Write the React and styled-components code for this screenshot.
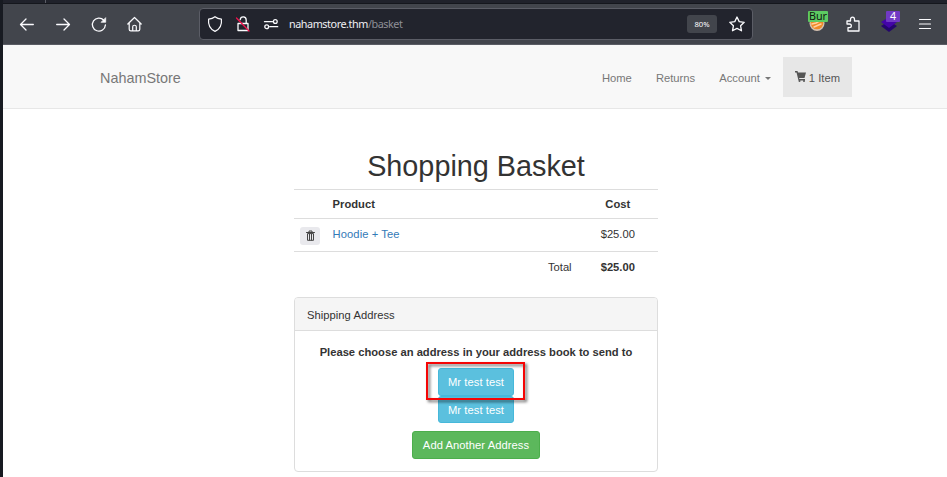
import React from 'react';
import styled, { createGlobalStyle } from 'styled-components';

const GlobalStyle = createGlobalStyle`
  * { box-sizing: border-box; }
  html, body { margin: 0; padding: 0; overflow: hidden; background: #fff; }
  body { font: 11.2px/16px "Liberation Sans", Arial, sans-serif; color: #333; }
`;

const Window = styled.div`
  width: 947px;
  height: 477px;
  display: flex;
  flex-direction: column;
  overflow: hidden;
  border-left: 3px solid #171a21;
`;

const TabStrip = styled.div`
  height: 4px;
  flex: none;
  display: flex;
  background: #20222b;
  border-bottom: 1px solid #15171d;
`;

const TabEdge = styled.div`
  width: 43px;
  height: 3px;
  border-right: 1px solid #5b5d66;
`;

const Toolbar = styled.div`
  height: 41px;
  flex: none;
  display: flex;
  align-items: center;
  background: #42454c;
  border-bottom: 1px solid #5a5c64;
  color: #fbfbfe;
`;

const NavButtons = styled.div`
  display: flex;
  gap: 20px;
  padding-left: 16px;
  width: 196px;
`;

const Icon = styled.svg`
  display: block;
  flex: none;
  width: ${(p) => p.$size || 16}px;
  height: ${(p) => p.$size || 16}px;
  overflow: visible;
  fill: none;
  stroke: currentColor;
  stroke-width: ${(p) => p.$stroke || 1.3};
  stroke-linecap: round;
  stroke-linejoin: round;
`;

const AddressBar = styled.div`
  width: 554px;
  height: 32px;
  display: flex;
  align-items: center;
  gap: 12px;
  padding: 0 7px;
  border: 1px solid #5b5d66;
  border-radius: 4px;
  background: #22242d;
`;

const Url = styled.span`
  flex: 1;
  margin-left: -2px;
  font: 10.8px/16px "Noto Sans", sans-serif;
  letter-spacing: -0.44px;
  color: #f0f0f4;
`;

const Path = styled.span`
  color: #8e8f97;
`;

const Zoom = styled.span`
  width: 30px;
  height: 18px;
  border-radius: 3px;
  background: #42454c;
  font: 7.7px/18px "Noto Sans", sans-serif;
  text-align: center;
`;

const Extensions = styled.div`
  display: flex;
  align-items: center;
  gap: 20px;
  padding-left: 56px;
`;

const Extension = styled.div`
  position: relative;
  width: 16px;
  height: 16px;
`;

const Badge = styled.span`
  position: absolute;
  left: ${(p) => p.$left}px;
  top: -5px;
  width: ${(p) => p.$width}px;
  height: 11px;
  border-radius: 1px;
  background: ${(p) => p.$bg};
  color: ${(p) => p.$fg};
  font: 10.7px/11px "Noto Sans", sans-serif;
  text-align: center;
`;

const Navbar = styled.nav`
  height: 64px;
  flex: none;
  display: flex;
  align-items: flex-start;
  justify-content: space-between;
  padding: 12px 95px 0 97px;
  background: #f8f8f8;
  border-bottom: 1px solid #e7e7e7;
  color: #777;
`;

const Brand = styled.a`
  font-size: 14.4px;
  line-height: 16px;
  padding-top: 13px;
`;

const Menu = styled.div`
  display: flex;
`;

const MenuItem = styled.a`
  display: flex;
  align-items: center;
  height: 40px;
  padding: 2px 12px 0;
  letter-spacing: 0.02px;
  background: ${(p) => (p.$active ? '#e7e7e7' : 'transparent')};
  color: ${(p) => (p.$active ? '#555' : '#777')};
`;

const Caret = styled.span`
  margin-left: 5px;
  border: 3px solid transparent;
  border-top-color: currentColor;
  border-bottom: 0;
`;

const CartIcon = styled.svg`
  width: 11px;
  height: 11px;
  margin: -4px 3px 0 0;
  fill: currentColor;
`;

const Main = styled.main`
  width: 364px;
  margin-left: 291px;
`;

const Title = styled.h1`
  height: 80px;
  margin: 0;
  padding-top: 41px;
  font-size: 28.8px;
  line-height: 32px;
  font-weight: 400;
  text-align: center;
`;

const Row = styled.div`
  display: grid;
  grid-template-columns: 32.6px 251px 80.4px;
  height: ${(p) => p.$height}px;
  padding-top: ${(p) => p.$top || 6}px;
  border-top: 1px solid #ddd;
`;

const Cell = styled.div`
  padding: 0 6px;
  text-align: ${(p) => p.$align || 'left'};
  font-weight: ${(p) => (p.$bold ? 700 : 400)};
`;

const ProductLink = styled.a`
  color: #337ab7;
  letter-spacing: 0.08px;
`;

const Remove = styled.button`
  display: flex;
  align-items: center;
  justify-content: center;
  width: 20px;
  height: 18px;
  margin-top: 1px;
  padding: 0 0 2px 1px;
  border: 0;
  border-radius: 3px;
  background: #e9e9ed;
  color: #444;
`;

const Panel = styled.section`
  height: 175px;
  margin-top: 13px;
  border: 1px solid #ddd;
  border-radius: 4px;
  overflow: hidden;
`;

const PanelHeading = styled.div`
  height: 33px;
  padding: 9px 12px 0;
  background: #f5f5f5;
  border-bottom: 1px solid #ddd;
  letter-spacing: 0.04px;
`;

const PanelBody = styled.div`
  display: flex;
  flex-direction: column;
  align-items: center;
  padding-top: 13px;
`;

const Prompt = styled.div`
  margin-bottom: 8px;
  font-weight: 700;
  white-space: nowrap;
`;

const Choice = styled.div`
  position: relative;
`;

const Button = styled.button`
  display: block;
  width: ${(p) => p.$width}px;
  height: ${(p) => p.$height || 28}px;
  margin-top: ${(p) => p.$gap || 0}px;
  padding: 0;
  border: 1px solid ${(p) => (p.$success ? '#4cae4c' : '#46b8da')};
  border-radius: 3px;
  background: ${(p) => (p.$success ? '#5cb85c' : '#5bc0de')};
  color: #fff;
  font: inherit;
  letter-spacing: 0.06px;
  white-space: nowrap;
`;

const Highlight = styled.div`
  position: absolute;
  z-index: 1;
  left: -12px;
  top: -6px;
  width: 99px;
  height: 38px;
  border: 2px solid #f50505;
  filter: drop-shadow(2px 2px 1.5px rgba(0, 0, 0, 0.6));
`;

export default function App() {
  return (
    <Window>
      <GlobalStyle />
      <TabStrip><TabEdge /></TabStrip>
      <Toolbar>
        <NavButtons>
          <Icon viewBox="0 0 16 16"><path d="M14.3 8.5H1.7M7 3 1.5 8.5 7 14" /></Icon>
          <Icon viewBox="0 0 16 16"><path d="M1.7 8.5h12.6M9 3l5.5 5.5L9 14" /></Icon>
          <Icon viewBox="0 0 16 16"><path d="M12.8 4.3A6.5 6.5 0 1 0 14.4 9" /><path d="M14.7 2v4.3h-4.3z" fill="currentColor" strokeWidth=".7" /></Icon>
          <Icon viewBox="0 0 16 16" $stroke={1.2}><path d="M.8 8 7.500 1.500 14.200 8M2.200 7v6.200c0 1 .6 1.600 1.600 1.600h7.400c1 0 1.600-.6 1.600-1.600V7M5.700 14.500v-3.700c0-2.100 3.600-2.100 3.600 0v3.700" /></Icon>
        </NavButtons>
        <AddressBar>
          <Icon viewBox="0 0 16 16" $stroke={1.2}><path d="M8 .7c2.100 1.700 4 2.200 6.400 2.400.6 5.200-1.500 10-6.400 12.300C3.100 13.100 1 8.300 1.600 3.100 4 2.900 5.900 2.400 8 .7z" /></Icon>
          <Icon viewBox="0 0 16 16"><path d="M3 7.500h10v7H3zM5.200 3.700c.4-4 6-3.800 6 .2v3.400" /><path d="M1.500 2 14 15" stroke="#f0134d" /></Icon>
          <Icon viewBox="0 0 16 16"><path d="M1.500 5.700h8M6.700 10.700h8" /><circle cx="12.300" cy="5.500" r="1.900" /><circle cx="3.700" cy="10.700" r="1.900" /></Icon>
          <Url>nahamstore.thm<Path>/basket</Path></Url>
          <Zoom>80%</Zoom>
          <Icon viewBox="0 0 16 16"><path d="m8 1 2.200 4.600 5 .7-3.600 3.500.9 5L8 12.400l-4.500 2.400.9-5L.8 6.300l5-.7z" /></Icon>
        </AddressBar>
        <Extensions>
          <Extension>
            <Icon viewBox="0 0 16 16"><circle cx="8" cy="7.500" r="7.500" fill="#d4c1b0" stroke="none" /><circle cx="8" cy="7" r="6.300" fill="#ee8a28" stroke="none" /><path d="m3 8 4-1 5-3M5 11l7-3" stroke="#ffd1a0" strokeWidth="1.500" /></Icon>
            <Badge $left={-1} $width={20} $bg="#5dcb62" $fg="#101810">Bur</Badge>
          </Extension>
          <Icon viewBox="0 0 16 16"><path d="M2 5h3.500V3.300c0-3 4-3 4 0V5H14v10H3v-3.300h1.400c2.600 0 2.600-3.700 0-3.700H2z" /></Icon>
          <Extension>
            <Icon viewBox="0 0 16 16"><path d="m0 10 8-5 8 5-8 6z" fill="#24056d" stroke="none" /><path d="m0 6 8-5 8 5-8 6z" fill="#4304a8" stroke="none" /></Icon>
            <Badge $left={5} $width={14} $bg="#7139c4" $fg="#fff">4</Badge>
          </Extension>
          <Icon viewBox="0 0 16 16"><path d="M2.500 3.500h11M2.500 8h11M2.500 12.500h11" strokeWidth="1.200" /></Icon>
        </Extensions>
      </Toolbar>
      <Navbar>
        <Brand>NahamStore</Brand>
        <Menu>
          <MenuItem>Home</MenuItem>
          <MenuItem>Returns</MenuItem>
          <MenuItem>Account<Caret /></MenuItem>
          <MenuItem $active>
            <CartIcon viewBox="0 0 22 22"><path d="M0 0h5l1 3h16l-3 11H8l1 2h11v3H7L3 3H0z" /><circle cx="9" cy="20" r="2" /><circle cx="18" cy="20" r="2" /></CartIcon>
            1 Item
          </MenuItem>
        </Menu>
      </Navbar>
      <Main>
        <Title>Shopping Basket</Title>
        <Row $height={29}>
          <Cell /><Cell $bold>Product</Cell><Cell $bold $align="center">Cost</Cell>
        </Row>
        <Row $height={33} $top={7}>
          <Cell>
            <Remove aria-label="Remove">
              <Icon $size={11} $stroke={1} viewBox="0 0 11 11"><path d="M1.500 2.500h8M4 2.200V1h3v1.200M2.500 4v6.300h6V4zM4.500 4v6M6.500 4v6" /></Icon>
            </Remove>
          </Cell>
          <Cell><ProductLink>Hoodie + Tee</ProductLink></Cell>
          <Cell $align="center">$25.00</Cell>
        </Row>
        <Row $height={33} $top={7}>
          <Cell /><Cell $align="right">Total</Cell><Cell $bold $align="center">$25.00</Cell>
        </Row>
        <Panel>
          <PanelHeading>Shipping Address</PanelHeading>
          <PanelBody>
            <Prompt>Please choose an address in your address book to send to</Prompt>
            <Choice>
              <Button $width={76}>Mr test test</Button>
              <Highlight />
            </Choice>
            <Button $width={76} $height={27}>Mr test test</Button>
            <Button $width={128} $gap={8} $success>Add Another Address</Button>
          </PanelBody>
        </Panel>
      </Main>
    </Window>
  );
}
